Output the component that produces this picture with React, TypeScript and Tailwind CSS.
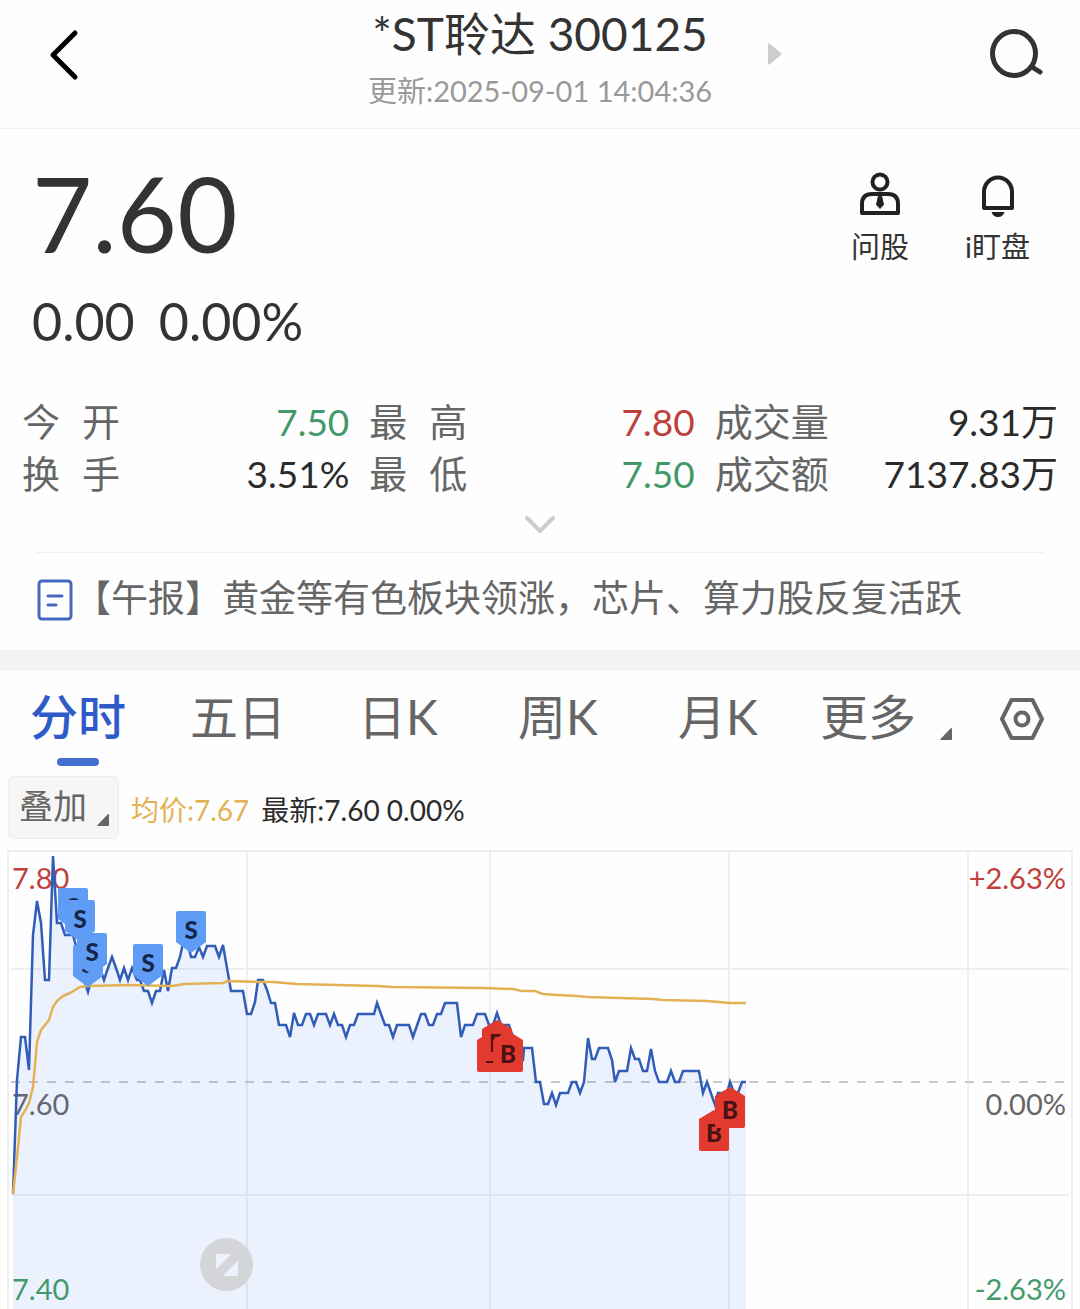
import { useState } from "react"

const pricePoints = "13,1194 17,1080 21,1037 25,1037 29,1070 33,935 37,901 41,923 45,980 49,980 53,856 57,923 61,923 65,935 73,935 77,950 84,980 88,992 92,977 96,968 100,968 104,980 108,968 112,957 116,968 120,980 124,968 128,980 132,968 137,980 140,980 144,991 148,991 152,1003 156,991 160,991 164,970 168,991 172,968 176,968 180,957 183,943 187,940 191,957 195,957 199,947 203,957 207,946 215,946 219,957 223,945 227,968 231,991 243,991 247,1014 251,1014 255,1002 258,980 263,980 267,990 271,1003 275,1003 279,1025 286,1025 290,1037 294,1013 298,1025 302,1025 306,1014 310,1014 314,1025 318,1014 326,1014 330,1025 334,1014 338,1025 342,1025 346,1037 350,1025 354,1025 358,1014 374,1014 377,1003 385,1025 389,1025 393,1037 397,1025 409,1025 413,1037 421,1014 425,1014 429,1025 433,1025 437,1014 441,1014 445,1003 457,1003 461,1037 465,1025 473,1025 477,1014 485,1014 489,1025 493,1025 497,1013 501,1025 509,1025 513,1037 519,1060 523,1060 524,1048 532,1048 536,1082 540,1082 544,1104 548,1104 552,1093 556,1105 560,1093 568,1093 572,1082 576,1082 580,1093 584,1082 588,1038 592,1059 595,1059 599,1048 608,1048 612,1060 615,1082 619,1071 627,1071 631,1048 635,1059 639,1059 643,1071 647,1071 651,1049 655,1071 659,1082 667,1082 671,1071 675,1082 679,1082 683,1071 699,1071 703,1093 707,1082 715,1105 718,1093 727,1093 730,1082 734,1093 738,1093 742,1082 746,1082"

const averagePoints = "13,1194 17,1157 21,1117 25,1111 29,1103 33,1087 37,1042 41,1030 49,1020 53,1007 57,1001 63,996 70,993 80,987 88,986 127,985 172,986 184,984 223,983 228,981 260,982 273,982 297,984 377,986 393,987 483,988 513,989 522,991 535,991 543,994 557,995 577,996 587,997 653,999 663,1000 707,1001 730,1003 746,1003"

const tabs = ["分时", "五日", "日K", "周K", "月K"]

const stats = [
    { label: "今开", value: "7.50", color: "text-[#429a6c]" },
    { label: "最高", value: "7.80", color: "text-[#c0403c]" },
    { label: "成交量", value: "9.31万", color: "text-[#2b2b2b]" },
    { label: "换手", value: "3.51%", color: "text-[#2b2b2b]" },
    { label: "最低", value: "7.50", color: "text-[#429a6c]" },
    { label: "成交额", value: "7137.83万", color: "text-[#2b2b2b]" },
]

const sells = [[73, 888], [80, 900], [88, 945], [92, 933], [148, 944], [191, 911]]
const buys = [[492, 1031], [497, 1020], [508, 1031], [714, 1110], [730, 1087]]

const Corner = ({ className }: { className: string }) => (
    <svg className={className} viewBox="0 0 12 12" fill="#666" aria-hidden="true">
        <path d="M11 0q1 0 1 1v10q0 1-1 1H1q-1 0-.5-1z" />
    </svg>
)

const Header = () => (
    <header className="grid h-[129px] grid-cols-[1fr_auto_1fr] border-b border-[#f0f0f0]">
        <div className="pt-7 pl-12">
            <button aria-label="返回" className="block">
                <svg className="h-[54px] w-8" viewBox="0 0 32 54" fill="none" stroke="#000" strokeWidth="5" strokeLinecap="round" strokeLinejoin="round">
                    <path d="M27 5L5 27l22 22" />
                </svg>
            </button>
        </div>
        <div className="pt-1 text-center">
            <h1 className="text-[46px] leading-[60px] text-[#333]">*ST聆达 300125</h1>
            <p className="text-[29px] leading-[54px] text-[#999]">更新:2025-09-01 14:04:36</p>
        </div>
        <div className="flex items-start justify-between pr-9 pl-14">
            <button aria-label="下一只" className="pt-[43px]">
                <svg className="h-[22px] w-[14px]" viewBox="0 0 14 22" fill="#ccc">
                    <path d="M0 1.500Q0 0 1.500.6L13 10q1 1 0 2L1.500 21.400Q0 22 0 20.500z" />
                </svg>
            </button>
            <button aria-label="搜索" className="pt-7">
                <svg className="h-[52px] w-14" viewBox="0 0 56 52" fill="none" stroke="#333" strokeWidth="5" strokeLinecap="round">
                    <ellipse cx="26" cy="25.500" rx="21.500" ry="22" />
                    <path d="M44 39l8 5" />
                </svg>
            </button>
        </div>
    </header>
)

const Quote = () => (
    <section className="flex justify-between pr-[50px] pl-8">
        <div className="text-[#333]">
            <p className="pt-7 text-[104px] leading-[112px]">7.60</p>
            <p className="flex gap-6 pt-5 text-[52px] leading-[64px]">
                <span>0.00</span>
                <span>0.00%</span>
            </p>
        </div>
        <div className="flex items-start gap-14 pt-10 text-[29px] leading-10 text-[#333]">
            <button className="flex flex-col items-center gap-[10px]">
                <svg className="h-12 w-11" viewBox="0 0 44 48" fill="none" stroke="#222" strokeWidth="4" strokeLinejoin="round">
                    <circle cx="22" cy="13" r="7.500" />
                    <path d="M4 44V35q0-10 10-10h16q10 0 10 10v9z" />
                    <path d="M20.500 27h3l2 8.500-3.500 4-3.500-4z" fill="#222" strokeWidth="1" />
                </svg>
                问股
            </button>
            <button className="flex flex-col items-center gap-[10px]">
                <svg className="h-12 w-11" viewBox="0 0 44 48" fill="none" stroke="#222" strokeWidth="4" strokeLinejoin="round">
                    <path d="M8 39V23a14 14.500 0 0 1 28 0v16z" />
                    <path d="M15.500 43h13q-1.500 5-6.500 5t-6.500-5z" fill="#222" stroke="none" />
                </svg>
                i盯盘
            </button>
        </div>
    </section>
)

const Stats = () => (
    <section>
        <dl className="grid auto-rows-[52px] grid-cols-[327fr_325fr_343fr] gap-x-5 px-[22px] pt-[42px] text-[38px] leading-[52px]">
            {stats.map((s) => (
                <div key={s.label} className="flex items-baseline justify-between">
                    <dt className={s.label.length === 2 ? "flex gap-[22px] text-[#666]" : "text-[#666]"}>
                        {s.label.length === 2 ? s.label.split("").map((c) => <span key={c}>{c}</span>) : s.label}
                    </dt>
                    <dd className={`text-[37px] ${s.color}`}>{s.value}</dd>
                </div>
            ))}
        </dl>
        <button aria-label="展开" className="mx-auto block pt-4">
            <svg className="h-5 w-8" viewBox="0 0 32 20" fill="none" stroke="#ccc" strokeWidth="4" strokeLinecap="round" strokeLinejoin="round">
                <path d="M3 3l13 13L29 3" />
            </svg>
        </button>
    </section>
)

const News = () => (
    <a href="#news" className="mx-9 mt-[17px] flex h-[98px] items-center border-t border-[#f0f0f0] pb-1 text-[37px] leading-[52px] text-[#666]">
        <svg className="h-11 w-[38px] shrink-0" viewBox="0 0 38 44" fill="none" stroke="#4468bd" strokeWidth="3" strokeLinecap="round">
            <rect x="3" y="3" width="32" height="38" rx="3" />
            <path d="M12 18h14M12 27h8" />
        </svg>
        <span className="truncate pb-1">【午报】黄金等有色板块领涨，芯片、算力股反复活跃</span>
    </a>
)

const Tabs = () => {
    const [active, setActive] = useState("分时")
    return (
        <nav className="grid h-[105px] grid-cols-[repeat(6,160fr)_120fr] text-[48px] leading-[64px] text-[#666]">
            {tabs.map((t) => (
                <button key={t} onClick={() => setActive(t)} className="flex flex-col items-center pt-[14px] pr-1">
                    <span className={t === active ? "font-medium text-[#2f5bc9]" : ""}>{t}</span>
                    {t === active && <span className="mt-[9px] h-2 w-[42px] rounded-full bg-[#446fd3]" />}
                </button>
            ))}
            <button aria-haspopup="menu" className="flex items-start pt-[14px] pl-5">
                更多
                <Corner className="mt-[43px] ml-6 h-3 w-3" />
            </button>
            <button aria-label="设置" className="flex items-start justify-center pt-6 pl-1">
                <svg className="h-12 w-11" viewBox="0 0 44 48" fill="none" stroke="#666" strokeWidth="4" strokeLinejoin="round">
                    <path d="M11.500 5h21L42 24l-9.500 19h-21L2 24z" />
                    <circle cx="22" cy="24" r="6.500" />
                </svg>
            </button>
        </nav>
    )
}

const Chart = () => (
    <section className="relative">
        <svg className="block w-full" viewBox="0 850 1080 459" fontFamily="Lato, 'Noto Sans CJK SC', sans-serif" fontSize="29">
            <g fill="none" stroke="#efefef" strokeWidth="2">
                <path d="M8 1309V851H1072V1309" />
                <path d="M11 969H1069M11 1195H1069M247 851V1309M490 851V1309M729 851V1309M968 851V1309" />
            </g>
            <path d="M11 1082H1066" stroke="#c8c8c8" strokeWidth="2" strokeDasharray="9 9" />
            <text x="12" y="889" fill="#c0403c">7.80</text>
            <text x="12" y="1115" fill="#666">7.60</text>
            <text x="1066" y="889" fill="#c0403c" textAnchor="end">+2.63%</text>
            <text x="1066" y="1115" fill="#666" textAnchor="end">0.00%</text>
            <text x="1066" y="1300" fill="#429a6c" textAnchor="end">-2.63%</text>
            <polygon points={`${pricePoints} 746,1309 13,1309`} fill="#4a7dff" fillOpacity="0.1" />
            <text x="12" y="1300" fill="#429a6c">7.40</text>
            <polyline points={pricePoints} fill="none" stroke="#315cb8" strokeWidth="2.500" />
            <polyline points={averagePoints} fill="none" stroke="#e3b254" strokeWidth="2.500" strokeLinejoin="round" />
            <g fontSize="24" fontWeight="900" textAnchor="middle">
                {sells.map(([x, y]) => (
                    <g key={`${x}-${y}`} transform={`translate(${x} ${y})`}>
                        <path d="M-13 0H13q2 0 2 2V31L0 42-15 31V2q0-2 2-2z" fill="#5e9cf6" />
                        <text y="28" fill="#14264a">S</text>
                    </g>
                ))}
                {buys.map(([x, y]) => (
                    <g key={`${x}-${y}`} transform={`translate(${x} ${y})`}>
                        <path d="M0 0L15 9V39q0 2-2 2H-13q-2 0-2-2V9z" fill="#e23a2e" />
                        <text y="32" fill="#4a1216">B</text>
                    </g>
                ))}
            </g>
        </svg>
        <button aria-label="全屏" className="absolute bottom-[18px] left-[200px] flex h-[53px] w-[53px] items-center justify-center rounded-full bg-[#d4d5d9]">
            <svg className="h-[22px] w-[22px]" viewBox="0 0 22 22" fill="#edf1fc">
                <path d="M1 0h13q1 0 .5 1L1 14.500q-1 .5-1-1V1q0-1 1-1zM21 22H8q-1 0-.5-1L21 7.500q1-.5 1 1V21q0 1-1 1z" />
            </svg>
        </button>
    </section>
)

export default function App() {
    return (
        <main className="overflow-hidden bg-[#fefefe] font-['Lato','Noto_Sans_CJK_SC',sans-serif]">
            <Header />
            <Quote />
            <Stats />
            <News />
            <div className="h-[21px] bg-[#f4f4f4]" />
            <Tabs />
            <div className="flex h-[74px] items-start pl-2 text-[28px] leading-10">
                <button aria-haspopup="menu" className="flex h-[63px] w-[111px] items-center gap-[10px] rounded-md border border-[#eee] bg-[#f6f6f6] pb-1 pl-[10px] text-[34px] text-[#666]">
                    叠加
                    <Corner className="mt-7 h-3 w-3" />
                </button>
                <p className="mt-[14px] ml-3 text-[#e3b254]">均价:7.67</p>
                <p className="mt-[14px] ml-3 text-[#2b2b2b]">最新:7.60 0.00%</p>
            </div>
            <Chart />
        </main>
    )
}
